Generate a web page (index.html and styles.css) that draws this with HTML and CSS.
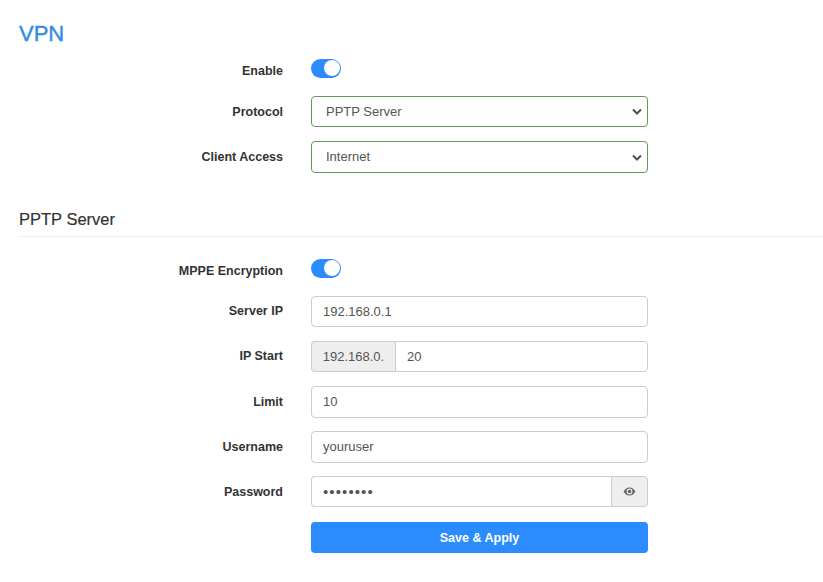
FILE: index.html
```html
<!DOCTYPE html>
<html lang="en">
  <head>
    <meta charset="UTF-8">
    <title>VPN</title>
    <link rel="stylesheet" href="styles.css">
  </head>
  <body>

<h1>VPN</h1>

<form class="form">
  <div class="row row-switch">
    <label>Enable</label>
    <span class="switch"><span class="knob"></span></span>
  </div>
  <div class="row">
    <label for="protocol">Protocol</label>
    <div class="select-wrap">
      <select id="protocol"><option>PPTP Server</option></select>
      <svg class="chevron" width="10" height="7" viewBox="0 0 10 7"><path d="M1 1.500l4 4 4-4" fill="none" stroke="#4f4f4f" stroke-width="2"/></svg>
    </div>
  </div>
  <div class="row row-tall">
    <label for="access">Client Access</label>
    <div class="select-wrap">
      <select id="access"><option>Internet</option></select>
      <svg class="chevron" width="10" height="7" viewBox="0 0 10 7"><path d="M1 1.500l4 4 4-4" fill="none" stroke="#4f4f4f" stroke-width="2"/></svg>
    </div>
  </div>
</form>

<h2>PPTP Server</h2>

<form class="form">
  <div class="row row-switch">
    <label>MPPE Encryption</label>
    <span class="switch"><span class="knob"></span></span>
  </div>
  <div class="row row-up">
    <label for="server-ip">Server IP</label>
    <input id="server-ip" type="text" value="192.168.0.1">
  </div>
  <div class="row row-up">
    <label for="ip-start">IP Start</label>
    <div class="group">
      <span class="addon addon-left">192.168.0.</span>
      <input id="ip-start" type="text" value="20">
    </div>
  </div>
  <div class="row row-tall">
    <label for="limit">Limit</label>
    <input id="limit" type="text" value="10">
  </div>
  <div class="row row-tall">
    <label for="username">Username</label>
    <input id="username" type="text" value="youruser">
  </div>
  <div class="row">
    <label for="password">Password</label>
    <div class="group">
      <input id="password" type="password" value="password">
      <span class="addon addon-right">
        <svg width="13" height="9" viewBox="0 0 14 10"><path d="M7 .5C4 .5 1.700 2.400.4 5 1.700 7.600 4 9.500 7 9.500S12.300 7.600 13.600 5C12.300 2.400 10 .5 7 .5zm0 7.700A3.200 3.200 0 1 1 7 1.800a3.200 3.200 0 0 1 0 6.400zM7 3a2 2 0 1 0 0 4 2 2 0 0 0 0-4z" fill="#666" fill-rule="evenodd"/></svg>
      </span>
    </div>
  </div>
  <div class="row row-submit">
    <span></span>
    <button type="button" class="btn">Save &amp; Apply</button>
  </div>
</form>

  </body>
</html>
```

FILE: styles.css
```css
*, ::before, ::after { box-sizing: border-box; }
html { font-family: "Liberation Sans", Arial, sans-serif; }

body {
  margin: 0;
  padding: 20px 0 0 19px;
  background: #fff;
  color: #333;
  font-size: 13px;
}

h1 {
  margin: 0 0 11px;
  color: #328ce4;
  font-size: 22px;
  font-weight: 400;
  line-height: 27px;
  -webkit-text-stroke: .4px #328ce4;
}

h2 {
  margin: 37px 0 0;
  padding-bottom: 7px;
  border-bottom: 1px solid #eee;
  font-size: 16.500px;
  font-weight: 400;
  line-height: 20px;
  -webkit-text-stroke: .2px #333;
}

.form {
  display: flex;
  flex-direction: column;
  gap: 14px;
}
h2 + .form { margin-top: 21px; }

.row {
  display: grid;
  grid-template-columns: 264px 337px;
  column-gap: 28px;
  align-items: center;
  height: 31px;
}
.row-switch {
  height: 19px;
  margin-bottom: 5px;
}
.row-switch label { margin-top: 6px; }
.row-up label { margin-bottom: 2px; }
.row-tall {
  height: 32px;
  margin-bottom: -1px;
}
.row-tall label { margin-bottom: 1px; }
.row-tall input, .row-tall select {
  height: 32px;
  padding-bottom: 1px;
}
.row-submit { margin-top: 1px; }

label {
  text-align: right;
  font-weight: 700;
  font-size: 12.500px;
  color: #333;
}

.switch {
  display: flex;
  justify-content: flex-end;
  align-items: center;
  width: 30px;
  height: 19px;
  padding-right: 1px;
  background: #2a8cff;
  border-radius: 10px;
}
.knob {
  width: 16px;
  height: 16px;
  background: #fff;
  border-radius: 50%;
}

input, select {
  width: 100%;
  height: 31px;
  padding: 0 11px;
  background: #fff;
  border: 1px solid #ccc;
  border-radius: 4px;
  outline: none;
  color: #555;
  font: 13px "Liberation Sans", Arial, sans-serif;
}
input[type=password] {
  font-size: 15px;
  letter-spacing: 1.100px;
}

.select-wrap { position: relative; }
select {
  appearance: none;
  padding-left: 14px;
  border-color: #649a57;
}
.chevron {
  position: absolute;
  top: calc(50% - 3.500px);
  right: 6px;
}

.group { display: flex; }
.group input {
  flex: 1;
  min-width: 0;
}
.addon {
  display: flex;
  align-items: center;
  justify-content: center;
  height: 31px;
  background: #eee;
  border: 1px solid #ccc;
  color: #555;
}
.addon-left {
  width: 84px;
  border-radius: 4px 0 0 4px;
  border-right: 0;
}
.addon-left + input { border-radius: 0 4px 4px 0; }
.addon-right {
  width: 37px;
  border-radius: 0 4px 4px 0;
  border-left: 1px solid #ccc;
}
.group input:first-child {
  border-right: 0;
  border-radius: 4px 0 0 4px;
}

.btn {
  height: 31px;
  background: #2a8cff;
  border: 0;
  border-radius: 4px;
  color: #fff;
  font: 700 12.500px "Liberation Sans", Arial, sans-serif;
}
```
